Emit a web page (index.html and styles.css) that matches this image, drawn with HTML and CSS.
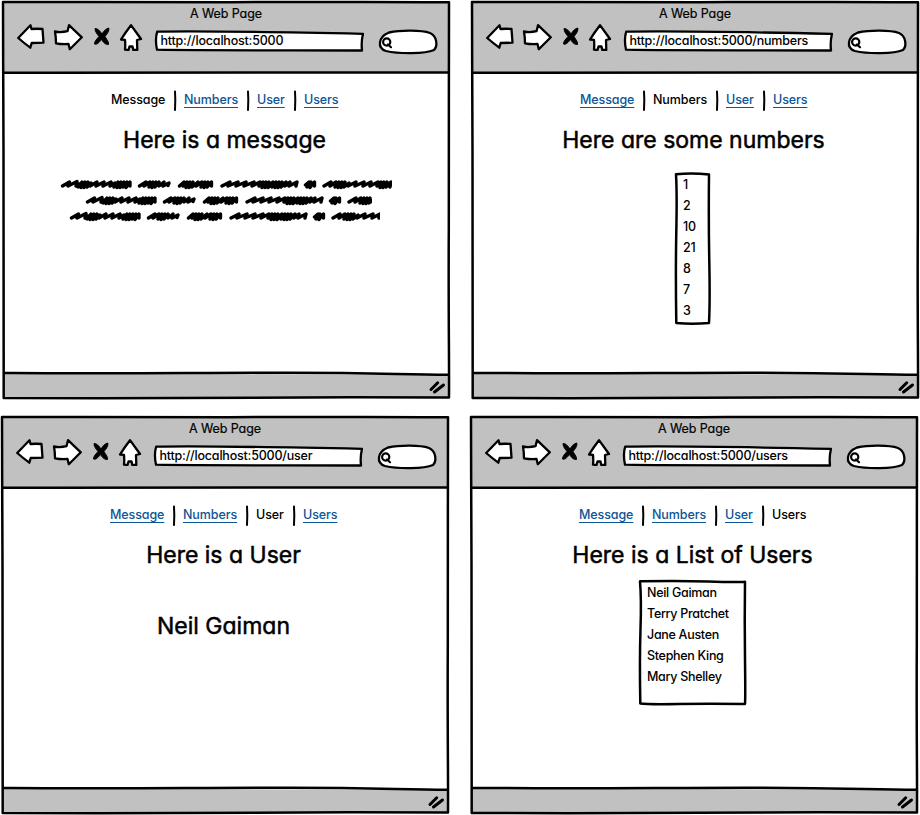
FILE: index.html
```html
<!DOCTYPE html>
<html lang="en">
<head>
<meta charset="utf-8">
<title>A Web Page</title>
<link rel="stylesheet" href="styles.css">
</head>
<body>
<svg class="defs" aria-hidden="true">
  <symbol id="frame" viewBox="0 0 452 402">
    <path fill="#c1c1c1" d="M3 2 448 2.300 449 72 4 72.500ZM4 373 449 375 449 398 4 398Z"/>
    <path class="line" d="M3 2C80 1.500 140 2.500 230 2.200S400 1.500 449 2.300C448.500 80 449.300 150 448.800 230S449.300 360 449 397.500C330 397 200 397 100 398.300L3.700 398C3 300 4 220 3.500 150S3.300 60 3 2ZM4 72.500C130 73.500 240 72.600 449 72.300M4 372.700C100 374.200 200 372.500 290 372.700S400 374.500 449 374.700"/>
    <path class="grip" d="M431 389.500 437.700 382.800M434.500 392 443.500 385"/>
  </symbol>
  <symbol id="back" viewBox="0 0 30 28"><path class="ico" d="M2.200 15 14.500 2.300 15.500 6Q21 5.500 26.500 6L27.500 19.700 15.700 20 14.300 24.700Q8 20 2.200 15Z"/></symbol>
  <symbol id="forward" viewBox="0 0 30 28"><path class="ico" d="M2 8.500Q8 9.700 14.500 8.200L16 2.200 28.800 14.300 16.800 26.300 15.500 21Q9 21.500 3 20.300Q3 14 2 8.500Z"/></symbol>
  <symbol id="stop" viewBox="0 0 20 22"><path stroke="#000" stroke-linejoin="round" d="M3 2.500C6 2.500 8 5 10 8C12 5 14 2.500 16.800 2C17.500 5 15 8 13 10.500C15 14 17 16 16.500 18.500C13.500 19 11 16 9.500 13.500C7 16.500 5 19 2.500 18C2.500 15 5 13 7 10.500C5 8 3 5.500 3 2.500Z"/></symbol>
  <symbol id="home" viewBox="0 0 24 28"><path class="ico" d="M12 2.200 22 16 18 17 18.300 27 14.300 27 13.500 23.500H10.500L9.500 27 6 26.700Q6.500 22 6 16.800L2 16.500Q6 10 12 2.200Z"/></symbol>
  <symbol id="address" viewBox="0 0 210 22"><path class="ico" d="M3.200 1.700C40 1 120 2 209 3.800Q207 12 208 20.500C140 20 60 20.800 3 19.700Q.8 9 3.200 1.700Z"/></symbol>
  <symbol id="search" viewBox="0 0 62 26"><path class="ico" d="M12 3.500C24 1 44 1 53 4C60 7 61 17 57 21C48 25 22 25 9 22C0 19 1 8 12 3.500Z"/><circle class="lens" cx="9.700" cy="13" r="3.600"/><path class="lens" d="M11 15.500 14 18.200"/></symbol>
  <symbol id="bar" viewBox="0 0 4 22"><path class="sep-line" d="M2 1.500 2.300 10 2 20"/></symbol>
  <symbol id="scribble" viewBox="0 0 340 14">
    <path class="ink" d="M2.500 9 9.500 5 8 9 17 4.500 16 9 19 7 18 10 22 5 21 10.500 25 5 24 10.500 28 5 27 10 31 6 30 9 37 5 36 9 44 5 43 9 51 5 50 9 55 6 54 10 58 5 57 10.500 61 5 60 10.500 64 5 63 10 67 5 66 10.500 70 5 70 9
    M79.500 9 86 5 84 9 90 5 89 10 93 5 92 10.500 96 5 95 10 99 5 99 9 104 5 103 9 109 6 108 8.500
    M119.500 9 124 5 123 9 127 5 126 10.500 130 5 129 10.500 133 5 132 10 138 5 136 9 142 5 141 10 145 5 144 10.500 148 5 147 10 151.500 5 151.500 9
    M162 9 170 5 168 9 178 5 176 9 186 5 184 9 194 5 192 9 200 5 199 9 203 5 202 10.500 206 5 205 10.500 209 5 208 10.500 213 5 212 10 216 5 215 10.500 219 5 218 10.500 222 5 221 10 226 5 225 9 230 5 229 9 237 5 236 9
    M245.500 8 249 5 247 10 251 5 250 10.500 254.500 5 254.500 9
    M264 9 271 5 270 9 276 5 275 10 279 5 278 10.500 282 5 281 10.500 285 5 284 10 289 6 288 9 296 5 295 9 304 5 303 9 311 5 310 9 318 5 317 9 321 5 320 10.500 324 5 323 10.500 327 5 326 10 331 5 330 10"/>
  </symbol>
</svg>
<main class="board">
  <section class="window">
    <svg class="frame"><use href="#frame"/></svg>
    <header class="chrome">
      <div class="title">A Web Page</div>
      <div class="toolbar">
        <svg class="back"><use href="#back"/></svg><svg class="forward"><use href="#forward"/></svg><svg class="stop"><use href="#stop"/></svg><svg class="home"><use href="#home"/></svg>
        <div class="address"><svg><use href="#address"/></svg><span>http://localhost:5000</span></div>
        <svg class="search"><use href="#search"/></svg>
      </div>
    </header>
    <nav class="nav"><span class="w-message">Message</span><svg><use href="#bar"/></svg><a class="w-numbers">Numbers</a><svg><use href="#bar"/></svg><a class="w-user">User</a><svg><use href="#bar"/></svg><a class="w-users">Users</a></nav>
    <h1 class="h-message">Here is a message</h1>
    <div class="scribbles">
      <div class="row row-a"><svg><use href="#scribble"/></svg></div>
      <div class="row row-b"><svg><use href="#scribble"/></svg></div>
      <div class="row row-c"><svg><use href="#scribble"/></svg></div>
    </div>
  </section>

  <section class="window">
    <svg class="frame"><use href="#frame"/></svg>
    <header class="chrome">
      <div class="title">A Web Page</div>
      <div class="toolbar">
        <svg class="back"><use href="#back"/></svg><svg class="forward"><use href="#forward"/></svg><svg class="stop"><use href="#stop"/></svg><svg class="home"><use href="#home"/></svg>
        <div class="address"><svg><use href="#address"/></svg><span>http://localhost:5000/numbers</span></div>
        <svg class="search"><use href="#search"/></svg>
      </div>
    </header>
    <nav class="nav"><a class="w-message">Message</a><svg><use href="#bar"/></svg><span class="w-numbers">Numbers</span><svg><use href="#bar"/></svg><a class="w-user">User</a><svg><use href="#bar"/></svg><a class="w-users">Users</a></nav>
    <h1 class="h-numbers">Here are some numbers</h1>
    <div class="list numbers">
      <svg viewBox="0 0 37 153"><path class="line" d="M2 2.300Q18 .8 35 2.500Q34.500 50 35.300 90T35 151Q18 152.500 2.300 151Q1.500 100 2.300 60T2 2.300Z"/></svg>
      <ul><li>1</li><li>2</li><li>10</li><li>21</li><li>8</li><li>7</li><li>3</li></ul>
    </div>
  </section>

  <section class="window lower">
    <svg class="frame"><use href="#frame"/></svg>
    <header class="chrome">
      <div class="title">A Web Page</div>
      <div class="toolbar">
        <svg class="back"><use href="#back"/></svg><svg class="forward"><use href="#forward"/></svg><svg class="stop"><use href="#stop"/></svg><svg class="home"><use href="#home"/></svg>
        <div class="address"><svg><use href="#address"/></svg><span>http://localhost:5000/user</span></div>
        <svg class="search"><use href="#search"/></svg>
      </div>
    </header>
    <nav class="nav"><a class="w-message">Message</a><svg><use href="#bar"/></svg><a class="w-numbers">Numbers</a><svg><use href="#bar"/></svg><span class="w-user">User</span><svg><use href="#bar"/></svg><a class="w-users">Users</a></nav>
    <h1 class="h-user">Here is a User</h1>
    <p class="name">Neil Gaiman</p>
  </section>

  <section class="window lower">
    <svg class="frame"><use href="#frame"/></svg>
    <header class="chrome">
      <div class="title">A Web Page</div>
      <div class="toolbar">
        <svg class="back"><use href="#back"/></svg><svg class="forward"><use href="#forward"/></svg><svg class="stop"><use href="#stop"/></svg><svg class="home"><use href="#home"/></svg>
        <div class="address"><svg><use href="#address"/></svg><span>http://localhost:5000/users</span></div>
        <svg class="search"><use href="#search"/></svg>
      </div>
    </header>
    <nav class="nav"><a class="w-message">Message</a><svg><use href="#bar"/></svg><a class="w-numbers">Numbers</a><svg><use href="#bar"/></svg><a class="w-user">User</a><svg><use href="#bar"/></svg><span class="w-users">Users</span></nav>
    <h1 class="h-list">Here is a List of Users</h1>
    <div class="list users">
      <svg viewBox="0 0 109 127"><path class="line" d="M2 2.300Q40 1.500 70 2.500T107 2.700Q106.500 40 107 80T107 125Q70 124.500 40 125T2.300 124.500Q1.500 80 2.500 50T2 2.300Z"/></svg>
      <ul><li>Neil Gaiman</li><li>Terry Pratchet</li><li>Jane Austen</li><li>Stephen King</li><li>Mary Shelley</li></ul>
    </div>
  </section>
</main>
</body>
</html>
```
FILE: styles.css
```css
* { box-sizing: border-box; }
body {
  margin: 0;
  background: #fff;
  color: #000;
  font: 500 13px/16px Inter, "Open Sans", sans-serif;
  font-feature-settings: "cv11", "calt" 0;
  overflow: hidden;
}
.defs { position: absolute; width: 0; height: 0; }
.board { display: grid; grid-template-columns: 469px 451px; grid-template-rows: 415px 400px; }
.window { position: relative; width: 452px; height: 402px; }
.lower { margin-left: -1px; }
.frame { position: absolute; left: 0; top: 0; width: 452px; height: 402px; z-index: -1; }
.line { fill: none; stroke: #000; stroke-width: 2.5; stroke-linejoin: round; stroke-linecap: round; }
.grip { fill: none; stroke: #000; stroke-width: 3; stroke-linecap: round; }
.ico { fill: #fff; stroke: #000; stroke-width: 2.3; stroke-linejoin: round; }
.lens { fill: none; stroke: #000; stroke-width: 2.2; stroke-linecap: round; }
.sep-line { fill: none; stroke: #000; stroke-width: 2; stroke-linecap: round; }
.ink { fill: none; stroke: #000; stroke-width: 3.4; stroke-linejoin: round; stroke-linecap: round; }

.chrome { height: 73px; padding-top: 6px; }
.title { text-align: center; height: 16px; font-size: 12.5px; font-weight: 400; -webkit-text-stroke: 0.2px; letter-spacing: -0.1px; }
.toolbar { display: flex; align-items: flex-start; padding-left: 16px; padding-top: 1px; }
.toolbar svg { display: block; flex: none; }
.back { width: 30px; height: 28px; }
.forward { width: 30px; height: 28px; margin-left: 7px; }
.stop { width: 20px; height: 22px; margin: 3px 0 0 9px; }
.home { width: 24px; height: 28px; margin-left: 7px; }
.address { position: relative; width: 210px; height: 22px; margin: 7px 0 0 10.5px; padding: 3px 0 0 7px; font-size: 12.5px; letter-spacing: -0.2px; }
.toolbar .address svg { position: absolute; left: 0; top: 0; width: 210px; height: 22px; }
.address span { position: relative; white-space: nowrap; }
.search { width: 62px; height: 26px; margin: 6px 0 0 13.5px; }

.nav { display: flex; height: 22px; margin: 17px 0 0 111px; font-size: 12.5px; letter-spacing: -0.1px; }
.nav svg { width: 4px; height: 22px; margin: 0 7px 0 8px; }
.nav a, .nav span { height: 16px; margin-top: 2px; white-space: nowrap; }
.nav a { color: #0c5596; text-decoration: underline; text-underline-offset: 3px; text-decoration-thickness: 1px; text-decoration-skip-ink: none; }
.w-message, .w-numbers { width: 54px; }
.w-user { width: 28px; }
.w-users { width: 36px; }

h1, .name { margin: 0; width: 449px; font-size: 23px; line-height: 30px; height: 30px; font-weight: 400; -webkit-text-stroke: 0.5px; text-align: center; white-space: nowrap; }
h1 { margin-top: 13px; }
.name { margin-top: 41px; }

.scribbles { margin-top: 22px; }
.row { height: 16px; overflow: hidden; }
.row svg { display: block; width: 340px; height: 14px; }
.row-a { width: 332px; margin-left: 60px; }
.row-b { width: 287px; margin-left: 85px; }
.row-c { width: 311px; margin-left: 69px; }

.list { position: relative; }
.list svg { position: absolute; left: 0; top: 0; width: 100%; height: 100%; }
.list ul { list-style: none; margin: 0; padding: 0 0 0 9px; }
.list li { height: 21px; line-height: 21px; font-size: 12.5px; white-space: nowrap; letter-spacing: -0.2px; }
.numbers { width: 37px; height: 153px; margin: 17px 0 0 205px; padding-top: 2px; }
.users { width: 109px; height: 127px; margin: 9px 0 0 170px; padding-top: 3px; }
.users li { letter-spacing: -0.3px; }
```
